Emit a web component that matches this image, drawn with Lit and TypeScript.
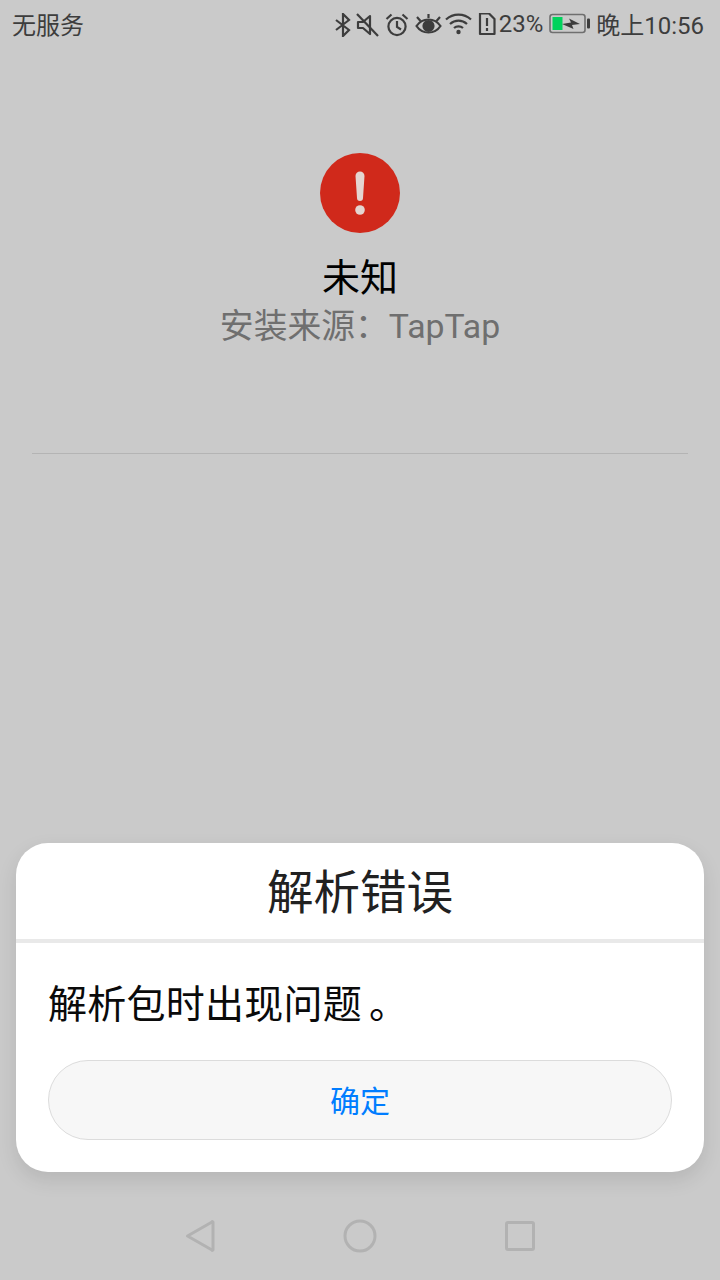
import { LitElement, css, html } from 'lit';
import { customElement } from 'lit/decorators.js';

@customElement('status-bar')
export class StatusBar extends LitElement {
  static styles = css`
    :host {
      display: flex;
      align-items: center;
      justify-content: space-between;
      height: 50px;
      padding: 0 16px 0 12px;
      box-sizing: border-box;
      color: #3d3d3d;
      font-size: 24px;
      font-family: Roboto, 'Noto Sans CJK SC', sans-serif;
    }
    .right {
      display: flex;
      align-items: center;
    }
    .label {
      padding-bottom: 4px;
    }
    svg {
      display: block;
      fill: none;
      stroke: #3d3d3d;
      stroke-width: 2.2;
    }
    .bt { width: 18px; height: 24px; margin-right: 4px; }
    .mute { width: 23px; height: 24px; margin-right: 6px; }
    .alarm { width: 24px; height: 24px; margin-right: 6px; }
    .eye { width: 27px; height: 24px; margin-right: 3px; }
    .wifi { width: 27px; height: 24px; margin-right: 6px; }
    .sim { width: 18px; height: 24px; margin-right: 3px; }
    .pct { margin-right: 6px; padding-bottom: 3px; }
    .batt { width: 42px; height: 24px; margin-right: 5px; }
  `;

  render() {
    return html`
      <span class="label">无服务</span>
      <div class="right">
        <svg class="bt" viewBox="0 0 18 24"><path d="M2 7l13 10-6 6V1l6 6L2 17" /></svg>
        <svg class="mute" viewBox="0 0 23 24">
          <path d="M2 9v6h5l7 6V3L7 9z" stroke-linejoin="round" />
          <path d="M1 1l21 22" />
        </svg>
        <svg class="alarm" viewBox="0 0 24 24">
          <circle cx="12" cy="13.500" r="8.600" />
          <path d="M12 8v6l4 2.500M1.500 6l5-4.500M22.500 6l-5-4.500" />
        </svg>
        <svg class="eye" viewBox="0 0 27 24">
          <path d="M1.500 13c3-4.500 7-6.500 12-6.500s9 2 12 6.500c-3 4.500-7 6.500-12 6.500s-9-2-12-6.500z" />
          <circle cx="13.500" cy="13" r="5" fill="#3d3d3d" />
          <path d="M2 4l3.500 4M25 4l-3.500 4M13.500 1v4" />
        </svg>
        <svg class="wifi" viewBox="0 0 27 24">
          <path d="M1 6.500c7-6.500 18-6.500 25 0M5 11c5-4.500 12-4.500 17 0M9 15c2.500-2.300 6.500-2.300 9 0" />
          <circle cx="13.500" cy="19" r="2.200" fill="#3d3d3d" stroke="none" />
        </svg>
        <svg class="sim" viewBox="0 0 18 24">
          <path d="M2 .5h9l5.500 5.500v15H2z" stroke-linejoin="round" />
          <path d="M9 5v8M9 15v3" />
        </svg>
        <span class="pct">23%</span>
        <svg class="batt" viewBox="0 0 42 24">
          <rect x="1" y="1.500" width="35" height="18" rx="2.500" stroke="#6f6f6f" stroke-width="1.600" />
          <rect x="3.500" y="4" width="10" height="13" fill="#00d35c" stroke="none" />
          <path d="M13 11l9-1.500-2-4 11 5.500-8 1 1.500 4z" fill="#3d3d3d" stroke="none" />
          <rect x="38" y="5.500" width="3" height="10" rx="1" fill="#3d3d3d" stroke="none" />
        </svg>
        <span class="label">晚上10:56</span>
      </div>
    `;
  }
}

@customElement('app-root')
export class AppRoot extends LitElement {
  static styles = css`
    :host {
      display: flex;
      flex-direction: column;
      width: 720px;
      height: 1280px;
      background: #cacaca;
      font-family: Roboto, 'Noto Sans CJK SC', sans-serif;
      overflow: hidden;
    }
    .app-info {
      display: flex;
      flex-direction: column;
      align-items: center;
      padding-top: 103px;
    }
    .alert {
      display: block;
      width: 80px;
      height: 80px;
    }
    .name {
      margin-top: 21px;
      font-size: 38px;
      line-height: 48px;
      color: #000;
    }
    .source {
      margin-top: 1px;
      font-size: 33.800px;
      line-height: 48px;
      color: #6f6f6f;
    }
    .rule {
      height: 1px;
      margin: 102px 32px 0;
      background: #b4b4b4;
    }
    .dialog {
      margin: auto 16px 0;
      height: 329px;
      background: #fff;
      border-radius: 32px;
      box-shadow: 0 8px 20px rgba(0, 0, 0, 0.1);
    }
    .dialog-title {
      height: 96px;
      line-height: 100px;
      text-align: center;
      font-size: 46.500px;
      color: #212121;
      border-bottom: 4px solid #e9e9e9;
    }
    .dialog-msg {
      padding: 38px 32px 0;
      font-size: 39px;
      line-height: 48px;
      letter-spacing: 0.25px;
      color: #0a0a0a;
    }
    .stop {
      margin-left: 7px;
    }
    .ok {
      display: block;
      box-sizing: border-box;
      width: 624px;
      height: 80px;
      margin: 31px 32px 0;
      padding: 0 0 3px;
      border: 1px solid #dcdcdc;
      border-radius: 40px;
      background: #f7f7f7;
      color: #007dff;
      font-family: inherit;
      font-size: 30px;
    }
    .nav {
      display: flex;
      justify-content: center;
      align-items: center;
      gap: 112px;
      height: 108px;
      padding-top: 20px;
      box-sizing: border-box;
    }
    .nav svg {
      display: block;
      width: 48px;
      height: 48px;
      fill: none;
      stroke: #b2b2b2;
      stroke-width: 3;
      stroke-linejoin: round;
    }
  `;

  render() {
    return html`
      <status-bar></status-bar>
      <div class="app-info">
        <svg class="alert" viewBox="0 0 80 80">
          <circle cx="40" cy="40" r="40" fill="#d0291b" />
          <path d="M35.500 23a4.500 4.500 0 0 1 9 0l-1.500 22a3 3 0 0 1-6 0z" fill="#e4d5d1" />
          <circle cx="40" cy="57" r="4.800" fill="#e4d5d1" />
        </svg>
        <div class="name">未知</div>
        <div class="source">安装来源：TapTap</div>
      </div>
      <div class="rule"></div>
      <div class="dialog">
        <div class="dialog-title">解析错误</div>
        <div class="dialog-msg">解析包时出现问题<span class="stop">。</span></div>
        <button class="ok">确定</button>
      </div>
      <div class="nav">
        <svg viewBox="0 0 48 48"><path d="M11.500 24L36 10a.5.5 0 0 1 1 .5v27a.5.5 0 0 1-1 .5z" /></svg>
        <svg viewBox="0 0 48 48"><circle cx="24" cy="24" r="15" /></svg>
        <svg viewBox="0 0 48 48"><rect x="10.500" y="10.500" width="27" height="27" rx="1.500" /></svg>
      </div>
    `;
  }
}
